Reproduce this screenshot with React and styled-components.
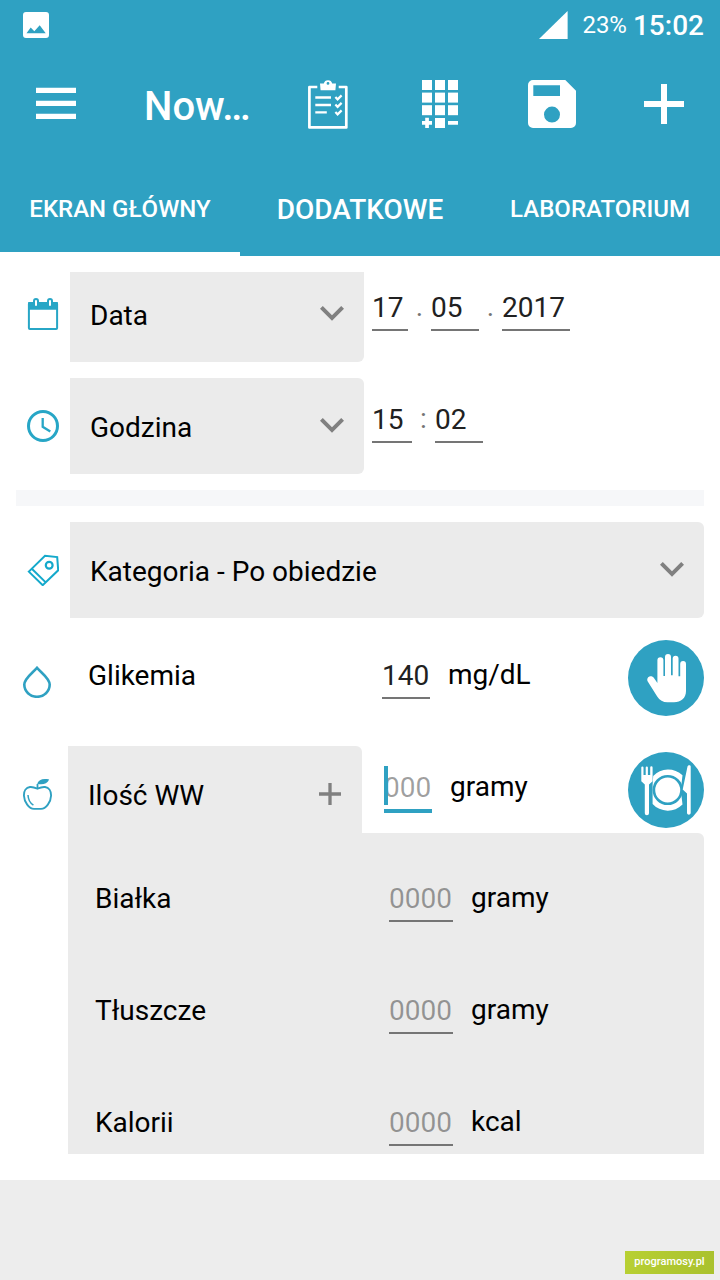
import React, { useState } from 'react';
import styled, { createGlobalStyle, ThemeProvider } from 'styled-components';

const theme = {
  primary: '#2fa1c2',
  panel: '#ebebeb',
  text: '#000000',
  inputText: '#212121',
  line: '#757575',
  hint: 'rgba(0, 0, 0, 0.38)',
};

const GlobalStyle = createGlobalStyle`
  * {
    box-sizing: border-box;
  }
  body {
    margin: 0;
    background-color: #ffffff;
    font-family: Roboto, 'Noto Sans', sans-serif;
  }
  button, input, select {
    font-family: inherit;
    margin: 0;
    padding: 0;
    border: none;
    border-radius: 0;
    background: transparent;
    outline: none;
  }
  svg {
    display: block;
    flex-shrink: 0;
  }
`;

const Page = styled.div`
  display: flex;
  flex-direction: column;
  height: 100vh;
  overflow: hidden;
`;

const Header = styled.header`
  flex-shrink: 0;
  color: #ffffff;
  background-color: ${(props) => props.theme.primary};
`;

const StatusBar = styled.div`
  display: flex;
  align-items: center;
  height: 48px;
  padding: 2px 16px 0 23px;
`;

const StatusRight = styled.div`
  display: flex;
  align-items: center;
  margin-left: auto;
`;

const Battery = styled.span`
  margin: 0 6px 0 14px;
  font-size: 24px;
`;

const Clock = styled.span`
  font-size: 28px;
  font-weight: 500;
`;

const AppBar = styled.div`
  display: flex;
  align-items: center;
  height: 112px;
`;

const BarButton = styled.button`
  display: flex;
  flex: 0 0 112px;
  align-items: center;
  justify-content: center;
  height: 112px;
  color: #ffffff;
`;

const Title = styled.h1`
  flex: 1;
  margin: 0;
  padding: 4px 0 0 32px;
  font-size: 40px;
  font-weight: 500;
  white-space: nowrap;
`;

const Tabs = styled.nav`
  display: grid;
  grid-template-columns: repeat(3, 1fr);
  height: 96px;
`;

const Tab = styled.button`
  padding-top: 6px;
  color: #ffffff;
  font-size: ${(props) => (props.$large ? '28px' : '24px')};
  font-weight: 500;
  white-space: nowrap;
  border-bottom: 4px solid
    ${(props) => (props.$active ? '#ffffff' : 'transparent')};
`;

const ScrollArea = styled.main`
  flex: 1;
  min-height: 0;
  margin: 16px 16px 26px;
  overflow: hidden;
`;

/* the list is scrolled a little, so the first row is cut at the top */
const Form = styled.form`
  display: flex;
  flex-direction: column;
  gap: 16px;
  margin-top: -6px;
`;

const Row = styled.div`
  display: flex;
  flex-shrink: 0;
  align-items: center;
  height: 96px;
`;

const IconCell = styled.div`
  display: flex;
  flex: 0 0 ${(props) => (props.$narrow ? '52px' : '54px')};
  justify-content: center;
  padding-right: ${(props) => (props.$narrow ? '10px' : '0')};
  color: ${(props) => props.theme.primary};
`;

const SelectBox = styled.div`
  display: grid;
  flex: ${(props) => (props.$wide ? '1' : '0 1 294px')};
  align-items: center;
  height: 96px;
  color: #808080;
  background-color: ${(props) => props.theme.panel};
  border-radius: 0 6px 6px 0;

  & > * {
    grid-area: 1 / 1;
  }
  & > svg {
    justify-self: end;
    margin: 0 20px 2px 0;
    pointer-events: none;
  }
`;

const Select = styled.select`
  appearance: none;
  width: 100%;
  height: 96px;
  padding: 2px 0 0 20px;
  color: ${(props) => props.theme.text};
  font-size: 28px;
`;

const Label = styled.label`
  flex: 0 1 294px;
  padding: 0 0 14px 20px;
  color: ${(props) => props.theme.text};
  font-size: 28px;
`;

const LabelBox = styled.div`
  display: flex;
  flex: 0 1 294px;
  align-items: center;
  justify-content: space-between;
  height: 96px;
  padding: 0 21px 0 20px;
  font-size: 28px;
  background-color: ${(props) => props.theme.panel};
  border-radius: 0 6px 0 0;

  label {
    padding-top: 2px;
  }
`;

const PlusButton = styled.button`
  color: #808080;
`;

const Fields = styled.div`
  position: relative;
  display: flex;
  height: 42px;
  margin-bottom: 8px;
  margin-left: ${(props) => props.$indent}px;
  font-size: 28px;
  line-height: 36px;
`;

const Input = styled.input`
  width: ${(props) => props.$width}px;
  height: ${(props) => (props.$active ? '44px' : '42px')};
  padding-bottom: 4px;
  color: ${(props) => props.theme.inputText};
  font-size: 28px;
  line-height: 36px;
  border-bottom: ${(props) =>
    props.$active
      ? `4px solid ${props.theme.primary}`
      : `2px solid ${props.theme.line}`};

  &::placeholder {
    color: ${(props) => props.theme.hint};
    opacity: 1;
  }
`;

const Separator = styled.span`
  width: 23px;
  color: ${(props) => props.theme.line};
  text-align: center;
`;

const Unit = styled.span`
  margin-left: 18px;
`;

const Caret = styled.span`
  position: absolute;
  top: -3px;
  left: 0;
  width: 4px;
  height: 39px;
  background-color: ${(props) => props.theme.primary};
`;

const RoundButton = styled.button`
  flex-shrink: 0;
  width: 76px;
  height: 76px;
  margin: 0 0 8px auto;
  color: #ffffff;
  background-color: ${(props) => props.theme.primary};
  border-radius: 50%;
`;

const Divider = styled.hr`
  flex-shrink: 0;
  width: 100%;
  height: 16px;
  margin: 0;
  border: none;
  background-color: #f6f7f9;
`;

const Details = styled.div`
  display: flex;
  flex-direction: column;
  gap: 16px;
  margin: -25px 0 0 52px;
  padding: 24px 0 16px 7px;
  background-color: ${(props) => props.theme.panel};
  border-radius: 0 6px 0 0;
`;

const Footer = styled.footer`
  display: flex;
  flex: 0 0 100px;
  align-items: flex-end;
  justify-content: flex-end;
  padding: 6px;
  background-color: #ededed;
`;

const Badge = styled.a`
  width: 89px;
  height: 23px;
  color: #ffffff;
  font-size: 11px;
  font-weight: 500;
  line-height: 22px;
  text-align: center;
  text-decoration: none;
  background: linear-gradient(100deg, #b8d033, #a9c12e);
`;

const MenuIcon = () => (
  <svg width="40" height="34" viewBox="0 0 40 34" fill="currentColor">
    <path d="M0 .7h40v5.3H0zM0 13.8h40v5.3H0zM0 26.8h40v5.3H0z" />
  </svg>
);

const PictureIcon = () => (
  <svg width="26" height="26" viewBox="0 0 26 26" fill="currentColor">
    <path
      fillRule="evenodd"
      d="M3 0h20a3 3 0 0 1 3 3v20a3 3 0 0 1-3 3H3a3 3 0 0 1-3-3V3a3 3 0 0 1 3-3zM3.5 21.3h19.2l-6-8-5.4 6-3.6-3.8z"
    />
  </svg>
);

const SignalIcon = () => (
  <svg width="29" height="28" viewBox="0 0 29 28" fill="currentColor">
    <path d="M28.6 0v28H0z" />
  </svg>
);

const ClipboardIcon = () => (
  <svg width="40" height="50" viewBox="0 0 40 50" fill="none" stroke="currentColor">
    <path d="M9.3 8H1.4v40.4h36.9V8h-7.6" strokeWidth="2.7" strokeLinejoin="round" />
    <path
      fill="currentColor"
      stroke="none"
      fillRule="evenodd"
      d="M12 4.6h3.8a4.3 4.3 0 0 1 8.4 0H28l-.6 6.7H12.600zM20 3a1.4 1.4 0 1 0 0 2.8A1.4 1.4 0 0 0 20 3z"
    />
    <path d="M7.3 18.5H23M7.3 26H23M7.3 33.4h11.5" strokeWidth="2.3" />
    <path
      d="M27.4 18l2.2 2.4 4-4M27.4 25.5l2.2 2.4 4-4M27.4 33l2.2 2.4 4-4"
      strokeWidth="2.2"
    />
  </svg>
);

const KeypadIcon = () => (
  <svg width="36" height="48" viewBox="0 0 36 48" fill="currentColor">
    {[0, 12.6, 25.2].map((y) =>
      [0, 13, 26].map((x) => (
        <rect key={`${x}-${y}`} x={x} y={y} width="10" height="10" />
      ))
    )}
    <path d="M13 38h10v10H13zM26 41h10v3.8H26zM3.2 37.8h3.7v3.3H10v3.7H6.9V48H3.2v-3.200H0v-3.700h3.2z" />
  </svg>
);

const SaveIcon = () => (
  <svg width="48" height="48" viewBox="0 0 48 48" fill="currentColor">
    <path
      fillRule="evenodd"
      d="M5 0h32.3L48 10.7V43a5 5 0 0 1-5 5H5a5 5 0 0 1-5-5V5a5 5 0 0 1 5-5zM5.3 5.2V16H32V5.2zM24 26.600a8 8 0 1 0 0 16 8 8 0 0 0 0-16z"
    />
  </svg>
);

const PlusIcon = ({ size, weight }) => (
  <svg width={size} height={size} viewBox="0 0 40 40" fill="none" stroke="currentColor">
    <path d="M20 0v40M0 20h40" strokeWidth={weight} />
  </svg>
);

const ChevronIcon = () => (
  <svg width="24" height="15" viewBox="0 0 24 15" fill="currentColor">
    <path d="M2.8 0L12 9.2 21.2 0 24 2.8l-12 12-12-12z" />
  </svg>
);

const LineIcon = ({ children, color }) => (
  <svg
    width="32"
    height="32"
    viewBox="0 0 32 32"
    fill="none"
    stroke={color || 'currentColor'}
    strokeWidth="2"
  >
    {children}
  </svg>
);

const CalendarIcon = () => (
  <LineIcon color="#27a6c6">
    <rect x="1.9" y="5" width="28.2" height="26" rx="1" />
    <path d="M1 5a1 1 0 0 1 1-1h28a1 1 0 0 1 1 1v6.800H1z" fill="#27a6c6" stroke="none" />
    <rect x="7" y="1" width="4" height="8" rx="2" fill="#ffffff" />
    <rect x="21" y="1" width="4" height="8" rx="2" fill="#ffffff" />
  </LineIcon>
);

const ClockIcon = () => (
  <LineIcon color="#27a6c6">
    <circle cx="16" cy="16" r="14.5" strokeWidth="3" />
    <path d="M15.700 8v8.800l7.600 4.600" strokeWidth="2.3" />
  </LineIcon>
);

const TagIcon = () => (
  <LineIcon color="#14a9cb">
    <path d="M1.800 17.600L18 1.800l12.200 1.300 1 13.200-15.500 14.900zM4.800 14.800l14.200 13.800" />
    <circle cx="22.2" cy="11.2" r="3.4" strokeWidth="2.2" />
  </LineIcon>
);

const DropIcon = () => (
  <LineIcon>
    <path
      d="M16 1.8C11.5 7 3.3 12.400 3.3 18.600a12.700 12.200 0 0 0 25.400 0C28.700 12.400 20.500 7 16 1.800z"
      strokeWidth="2.6"
    />
  </LineIcon>
);

const AppleIcon = () => (
  <LineIcon>
    <path
      d="M16.4 10.6C13.5 9.400 11.5 8.700 9 9c-4 .5-6.300 4-6.100 8.500C3.200 24 8 30.900 13 30.900h7C25 30.900 29.900 24 30.100 17.500c.1-4.500-2.200-8-6.100-8.500-2.500-.3-4.700.4-7.600 1.600z"
      strokeWidth="1.9"
    />
    <path d="M16.5 10.5V6" strokeWidth="1.8" />
    <path
      d="M16.200 5.800C17.500 1.500 22 .2 28.200 1.500 26 6 21.500 7.200 16.200 5.800z"
      fill="currentColor"
      stroke="none"
    />
    <path d="M7 17c.2 4.500 2 8 5.400 10.200" strokeWidth="1.5" />
  </LineIcon>
);

const HandIcon = () => (
  <svg width="76" height="76" viewBox="0 0 76 76" fill="currentColor">
    <path d="M29.4 43V20.300a3 3 0 0 1 6 0V36H37V17a3 3 0 0 1 6 0v18.300h1.700V18.600a2.900 2.900 0 0 1 5.800 0V36.300h1.700V24a2.900 2.900 0 0 1 5.800 0v27c0 7-5 11.300-12 11.300h-6.500c-4.500 0-8-2-10.300-5.800L19.600 41.200c-1.600-3.800 3-6.700 6-3.600z" />
  </svg>
);

const MealIcon = () => (
  <svg width="76" height="76" viewBox="0 0 76 76" fill="currentColor">
    <path d="M25.200 24a20.700 20.700 0 0 1 29.300-.7L52.800 38 54.500 52.600a20.700 20.700 0 0 1-29.900-.7V33z" />
    <circle cx="39.7" cy="38" r="13.8" stroke="#2fa1c2" strokeWidth="2.6" />
    <path d="M13.3 15.500a1 1 0 0 1 2.200 0V23h2.200v-7.500a1 1 0 0 1 2.200 0V23h2.300v-7.500a1 1 0 0 1 2.400 0v13.700L21 32.600v28.600a2 2 0 0 1-4.200 0V32.600l-3.500-3.400z" />
    <path d="M62.7 14.500v46.800a1.900 1.900 0 0 1-3.700 0V41.500L54.700 37.500l4.800-23c.7-1.800 3.200-1.600 3.200 0z" />
  </svg>
);

const nutrients = [
  { id: 'bialka', name: 'Białka', unit: 'gramy' },
  { id: 'tluszcze', name: 'Tłuszcze', unit: 'gramy' },
  { id: 'kalorie', name: 'Kalorii', unit: 'kcal' },
];

const tabs = [
  { name: 'EKRAN GŁÓWNY' },
  { name: 'DODATKOWE', large: true },
  { name: 'LABORATORIUM' },
];

const Dropdown = ({ label, wide }) => (
  <SelectBox $wide={wide}>
    <Select aria-label={label}>
      <option>{label}</option>
    </Select>
    <ChevronIcon />
  </SelectBox>
);

const App = () => {
  const [active, setActive] = useState('EKRAN GŁÓWNY');

  return (
    <ThemeProvider theme={theme}>
      <GlobalStyle />
      <Page>
        <Header>
          <StatusBar>
            <PictureIcon />
            <StatusRight>
              <SignalIcon />
              <Battery>23%</Battery>
              <Clock>15:02</Clock>
            </StatusRight>
          </StatusBar>
          <AppBar>
            <BarButton aria-label="Menu">
              <MenuIcon />
            </BarButton>
            <Title>Now…</Title>
            <BarButton aria-label="Lista">
              <ClipboardIcon />
            </BarButton>
            <BarButton aria-label="Kalkulator">
              <KeypadIcon />
            </BarButton>
            <BarButton aria-label="Zapisz">
              <SaveIcon />
            </BarButton>
            <BarButton aria-label="Dodaj">
              <PlusIcon size={40} weight={6} />
            </BarButton>
          </AppBar>
          <Tabs>
            {tabs.map(({ name, large }) => (
              <Tab
                key={name}
                $large={large}
                $active={active === name}
                onClick={() => setActive(name)}
              >
                {name}
              </Tab>
            ))}
          </Tabs>
        </Header>

        <ScrollArea>
          <Form>
            <Row>
              <IconCell>
                <CalendarIcon />
              </IconCell>
              <Dropdown label="Data" />
              <Fields $indent={8}>
                <Input $width={36} defaultValue="17" aria-label="Dzień" />
                <Separator>.</Separator>
                <Input $width={48} defaultValue="05" aria-label="Miesiąc" />
                <Separator>.</Separator>
                <Input $width={68} defaultValue="2017" aria-label="Rok" />
              </Fields>
            </Row>
            <Row>
              <IconCell>
                <ClockIcon />
              </IconCell>
              <Dropdown label="Godzina" />
              <Fields $indent={8}>
                <Input $width={40} defaultValue="15" aria-label="Godzina" />
                <Separator>:</Separator>
                <Input $width={48} defaultValue="02" aria-label="Minuta" />
              </Fields>
            </Row>
            <Divider />
            <Row>
              <IconCell>
                <TagIcon />
              </IconCell>
              <Dropdown label="Kategoria - Po obiedzie" wide />
            </Row>
            <Row>
              <IconCell $narrow>
                <DropIcon />
              </IconCell>
              <Label htmlFor="glikemia">Glikemia</Label>
              <Fields $indent={20}>
                <Input id="glikemia" $width={48} defaultValue="140" />
                <Unit>mg/dL</Unit>
              </Fields>
              <RoundButton type="button" aria-label="Wpis ręczny">
                <HandIcon />
              </RoundButton>
            </Row>
            <Row>
              <IconCell $narrow>
                <AppleIcon />
              </IconCell>
              <LabelBox>
                <label htmlFor="ww">Ilość WW</label>
                <PlusButton type="button" aria-label="Więcej">
                  <PlusIcon size={22} weight={6} />
                </PlusButton>
              </LabelBox>
              <Fields $indent={22}>
                <Caret />
                <Input id="ww" $width={48} $active placeholder="000" />
                <Unit>gramy</Unit>
              </Fields>
              <RoundButton type="button" aria-label="Posiłek">
                <MealIcon />
              </RoundButton>
            </Row>
            <Details>
              {nutrients.map(({ id, name, unit }) => (
                <Row key={id}>
                  <Label htmlFor={id}>{name}</Label>
                  <Fields $indent={20}>
                    <Input id={id} $width={64} placeholder="0000" />
                    <Unit>{unit}</Unit>
                  </Fields>
                </Row>
              ))}
            </Details>
          </Form>
        </ScrollArea>

        <Footer>
          <Badge href="#programosy">programosy.pl</Badge>
        </Footer>
      </Page>
    </ThemeProvider>
  );
};

export default App;
